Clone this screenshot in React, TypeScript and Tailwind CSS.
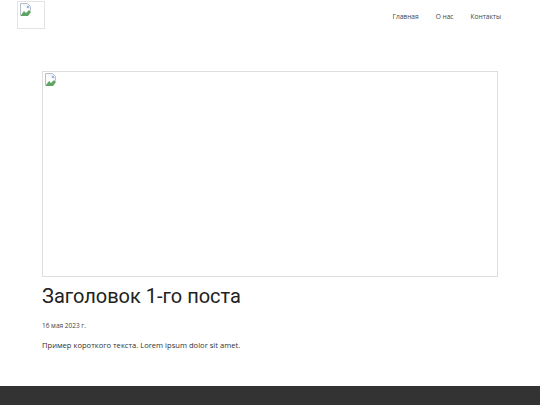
import React from "react";

function BrokenIcon() {
  return (
    <svg width="16" height="16" viewBox="0 0 16 16" className="absolute left-0 top-0">
      <path d="M2.5 1.5h7l3 3v4" fill="#f2f4f7" stroke="#b8bec8" strokeWidth="1" />
      <path d="M2.5 1.5v12h4" fill="none" stroke="#b8bec8" strokeWidth="1" />
      <path d="M3 13l3-4 2 2 3-3 2 2-3 4H3z" fill="#5fa463" />
      <circle cx="10" cy="5" r="1.2" fill="#8fb6e0" />
    </svg>
  );
}

export default function App() {
  return (
    <div className="min-h-[405px] flex flex-col bg-white" style={{ fontFamily: '"Open Sans", sans-serif' }}>
      <header className="flex items-start justify-between pl-[17px] pr-[38px] pt-[1px] h-[40px]">
        <div className="relative w-[28px] h-[28px] border border-[#e3e3e3]">
          <BrokenIcon />
        </div>
        <nav className="flex gap-[17px] text-[6.6px] text-[#444] pt-[11px] mr-[1px]">
          <span>Главная</span>
          <span>О нас</span>
          <span>Контакты</span>
        </nav>
      </header>
      <main className="flex-1 px-[42px] pt-[31px]">
        <div className="relative w-[456px] h-[206px] border border-[#dedede]">
          <BrokenIcon />
        </div>
        <h1 className="mt-[5px] text-[20px] leading-[28px] text-[#222]" style={{ fontFamily: 'Roboto, sans-serif' }}>
          Заголовок 1-го поста
        </h1>
        <p className="mt-[11px] text-[6.5px] leading-[10px] text-[#444]">16 мая 2023 г.</p>
        <p className="mt-[8px] text-[7.6px] leading-[12px] text-[#333]">Пример короткого текста. Lorem ipsum dolor sit amet.</p>
      </main>
      <footer className="h-[19px] bg-[#333]" />
    </div>
  );
}
